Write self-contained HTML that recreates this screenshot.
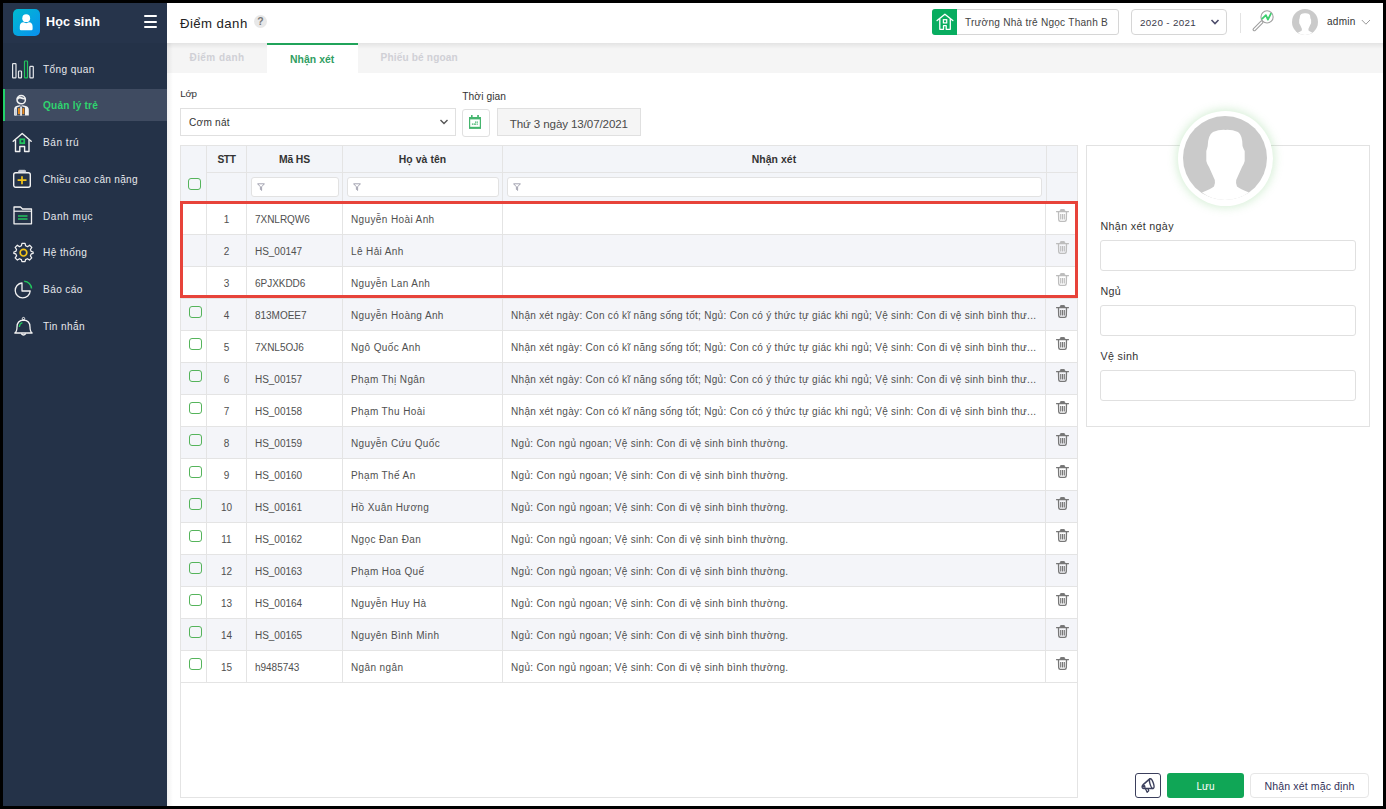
<!DOCTYPE html>
<html><head><meta charset="utf-8"><title>Điểm danh</title><style>
*{box-sizing:border-box;margin:0;padding:0}
html,body{width:1386px;height:809px;overflow:hidden;background:#000;font-family:"Liberation Sans", sans-serif}
#root{position:absolute;left:0;top:0;width:1386px;height:809px;background:#000}
.a{position:absolute}
.t{position:absolute;white-space:nowrap;line-height:1}
</style></head>
<body><div id="root">
<div class="a" style="left:3px;top:3px;width:1380px;height:803px;background:#fff"></div>
<div class="a" style="left:3px;top:3px;width:164px;height:803px;background:#243248"></div>
<div class="a" style="left:3px;top:3px;width:164px;height:40px;background:#26344b"></div>
<div class="a" style="left:13px;top:9px;width:27px;height:27px;border-radius:5px;background:linear-gradient(135deg,#00bcd0,#0a8ff0)"></div>
<svg class="a" style="left:13px;top:9px" width="27" height="27" viewBox="0 0 27 27"><circle cx="13.2" cy="9.2" r="3.9" fill="#fff"/><path d="M6.8 20 V17.5 Q6.8 13.4 10.5 13.2 L13.2 14.2 L15.9 13.2 Q19.6 13.4 19.6 17.5 V20 Q19.6 21.2 18.4 21.2 H8 Q6.8 21.2 6.8 20 Z" fill="#fff"/></svg>
<div class="t" style="left:46px;top:16.23px;font-size:12.6px;letter-spacing:0.1px;font-weight:700;color:#fff;">Học sinh</div>
<div class="a" style="left:144px;top:15px;width:13px;height:2px;background:#fff;border-radius:1px"></div>
<div class="a" style="left:144px;top:20.5px;width:13px;height:2px;background:#fff;border-radius:1px"></div>
<div class="a" style="left:144px;top:26px;width:13px;height:2px;background:#fff;border-radius:1px"></div>
<div class="a" style="left:3px;top:89px;width:164px;height:32px;background:#3f4b61"></div>
<div class="a" style="left:3px;top:89px;width:2px;height:32px;background:#22d36b"></div>
<div class="t" style="left:43px;top:65.15px;font-size:10.1px;letter-spacing:0.39px;font-weight:400;color:#e6e8ec;">Tổng quan</div>
<div class="t" style="left:43px;top:101.25px;font-size:10.1px;letter-spacing:0.21px;font-weight:700;color:#2fd46f;">Quản lý trẻ</div>
<div class="t" style="left:43px;top:137.95px;font-size:10.1px;letter-spacing:0.52px;font-weight:400;color:#e6e8ec;">Bán trú</div>
<div class="t" style="left:43px;top:175.05px;font-size:10.1px;letter-spacing:0.28px;font-weight:400;color:#e6e8ec;">Chiều cao cân nặng</div>
<div class="t" style="left:43px;top:212.25px;font-size:10.1px;letter-spacing:0.51px;font-weight:400;color:#e6e8ec;">Danh mục</div>
<div class="t" style="left:43px;top:248.25px;font-size:10.1px;letter-spacing:0.4px;font-weight:400;color:#e6e8ec;">Hệ thống</div>
<div class="t" style="left:43px;top:284.95px;font-size:10.1px;letter-spacing:0.4px;font-weight:400;color:#e6e8ec;">Báo cáo</div>
<div class="t" style="left:43px;top:322.05px;font-size:10.1px;letter-spacing:0.4px;font-weight:400;color:#e6e8ec;">Tin nhắn</div>
<svg class="a" style="left:11px;top:59px" width="24" height="21" viewBox="0 0 24 21"><rect x="1.6" y="4.6" width="3.4" height="14.2" rx="0.6" fill="none" stroke="#e4e6ea" stroke-width="1.2"/><rect x="7.5" y="12" width="3" height="6.8" rx="0.6" fill="none" stroke="#e4e6ea" stroke-width="1.2"/><rect x="13.5" y="2" width="3" height="16.8" rx="0.6" fill="none" stroke="#22c55e" stroke-width="1.2"/><rect x="18.9" y="7.4" width="3.4" height="11.4" rx="0.6" fill="none" stroke="#e4e6ea" stroke-width="1.2"/></svg>
<svg class="a" style="left:13px;top:94px" width="18" height="23" viewBox="0 0 18 23"><path d="M1.1 21.6 V15.5 Q1.1 12.4 4.2 11.7 L6.6 11.2 L8.05 12.2 L9.5 11.2 L11.9 11.7 Q15.8 12.4 15.8 15.5 V21.6 Z" fill="#f2f2f2"/><path d="M3.9 21.6 V13.4 L7.2 12.3 L8.9 12.3 L12 13.4 V21.6 Z" fill="#3f4b61"/><rect x="7.2" y="12.6" width="1.7" height="9" fill="#f2f2f2"/><rect x="5" y="14.2" width="1.9" height="5.9" fill="#e8891c"/><rect x="9.4" y="14.2" width="1.9" height="5.9" fill="#e8891c"/><rect x="1.9" y="15" width="1.4" height="6.6" fill="#c9ced8"/><circle cx="8.2" cy="5.65" r="4.2" fill="none" stroke="#f2f2f2" stroke-width="1.5"/><path d="M4.3 5.2 Q6 2.6 8.3 3.9 Q10.3 4.9 12.3 4.4" fill="none" stroke="#f2f2f2" stroke-width="1.8"/><rect x="7.6" y="11.4" width="0.9" height="0.9" fill="#b8bec9"/></svg>
<svg class="a" style="left:12px;top:132px" width="21" height="21" viewBox="0 0 21 21"><path d="M1.2 9.2 L10.2 1.5 L19.2 9.2" fill="none" stroke="#f2f2f2" stroke-width="1.4" stroke-linejoin="round" stroke-linecap="round"/><path d="M3.5 8 V19.5 H7.8 V14.5 H12.6 V19.5 H17 V8" fill="none" stroke="#f2f2f2" stroke-width="1.4" stroke-linejoin="round"/><rect x="8.3" y="7.3" width="3.9" height="3.9" fill="none" stroke="#22c55e" stroke-width="1.8"/></svg>
<svg class="a" style="left:12px;top:169px" width="21" height="20" viewBox="0 0 21 20"><rect x="1.7" y="3.7" width="16.6" height="14.6" rx="2" fill="none" stroke="#f2f2f2" stroke-width="1.4"/><path d="M6.6 3.3 V2.2 Q6.6 1.3 7.6 1.3 H12.6 Q13.6 1.3 13.6 2.2 V3.3" fill="#c7ccd6" stroke="#c7ccd6" stroke-width="1"/><path d="M10 7.2 V15.2 M5.6 11.2 H14.5" stroke="#f5c518" stroke-width="1.7"/></svg>
<svg class="a" style="left:13px;top:206px" width="20" height="19" viewBox="0 0 20 19"><path d="M1 17.8 V1 H7.5 L9.5 3 H18.5 V17.8 Z" fill="none" stroke="#f2f2f2" stroke-width="1.3" stroke-linejoin="round"/><path d="M1 5.2 H18.5" stroke="#f2f2f2" stroke-width="1.2"/><path d="M5 10 H14.5 M5 13 H14.5" stroke="#22c55e" stroke-width="1.5"/></svg>
<svg class="a" style="left:13px;top:242px" width="21" height="21" viewBox="0 0 24 24"><path d="M10.2 1.5 H13.8 L14.4 4.3 L16.6 5.3 L19 3.7 L21.5 6.2 L19.9 8.6 L20.8 10.8 L23 11.4 V13 L20.8 13.6 L19.9 15.8 L21.4 18.2 L18.9 20.7 L16.5 19.1 L14.3 20.1 L13.8 22.5 H10.2 L9.6 20.1 L7.4 19.1 L5 20.7 L2.5 18.2 L4.1 15.8 L3.2 13.6 L1 13 V11.4 L3.2 10.8 L4.1 8.6 L2.5 6.2 L5 3.7 L7.4 5.3 L9.6 4.3 Z" fill="none" stroke="#f2f2f2" stroke-width="1.4" stroke-linejoin="round"/><circle cx="12" cy="12.2" r="3.8" fill="none" stroke="#f5c518" stroke-width="1.9"/></svg>
<svg class="a" style="left:13px;top:280px" width="20" height="20" viewBox="0 0 20 20"><path d="M9 3 A7.5 7.5 0 1 0 17.2 11 H9 Z" fill="none" stroke="#f2f2f2" stroke-width="1.3" stroke-linejoin="round"/><path d="M11.2 1.3 A7.5 7.5 0 0 1 18.5 8.6" fill="none" stroke="#22c55e" stroke-width="1.5"/></svg>
<svg class="a" style="left:13px;top:316px" width="21" height="21" viewBox="0 0 21 21"><path d="M1.8 17 Q4 15.5 4 11 Q4 4.5 10.5 4 Q17 4.5 17 11 Q17 15.5 19.2 17 Z" fill="none" stroke="#f2f2f2" stroke-width="1.3" stroke-linejoin="round"/><circle cx="10.5" cy="2.6" r="1.2" fill="none" stroke="#f2f2f2" stroke-width="1"/><path d="M8.2 17.5 Q10.5 20.5 12.8 17.5" fill="none" stroke="#f2f2f2" stroke-width="1.3"/><path d="M6.3 11 Q6.6 7.6 9.4 6.6" fill="none" stroke="#22c55e" stroke-width="1.4"/></svg>
<div class="t" style="left:180px;top:16.73px;font-size:13.2px;letter-spacing:0.43px;font-weight:400;color:#222;">Điểm danh</div>
<div class="a" style="left:254px;top:15px;width:13px;height:13px;border-radius:50%;background:#e8e8e8;color:#7a7a7a;font-size:10.5px;line-height:13.5px;text-align:center;font-weight:700">?</div>
<div class="a" style="left:932px;top:9px;width:187px;height:26px;border:1px solid #d6d6d6;border-radius:3px;background:#fff"></div>
<div class="a" style="left:932px;top:9px;width:25px;height:25.5px;background:#08ad60;border-radius:3px 0 0 3px"></div>
<svg class="a" style="left:935px;top:12px" width="19" height="19" viewBox="0 0 19 19"><path d="M2.1 8.5 L9.9 2.2 L17.8 8.5" fill="none" stroke="#fff" stroke-width="1.4" stroke-linecap="round" stroke-linejoin="round"/><path d="M4.8 6.8 V17.3 H8.5 V13.7 H11.2 V17.3 H15.3 V6.8" fill="none" stroke="#fff" stroke-width="1.3" stroke-linejoin="round"/><rect x="8.4" y="7.7" width="3.3" height="3.2" fill="none" stroke="#fff" stroke-width="1.25"/></svg>
<div class="t" style="left:965px;top:18.25px;font-size:10.1px;letter-spacing:0.23px;font-weight:400;color:#444;">Trường Nhà trẻ Ngọc Thanh B</div>
<div class="a" style="left:1131px;top:9px;width:96px;height:26px;border:1px solid #d6d6d6;border-radius:4px"></div>
<div class="t" style="left:1140px;top:18.2px;font-size:9.8px;letter-spacing:0.35px;color:#3a3a4a">2020 - 2021</div>
<svg class="a" style="left:1210px;top:18px" width="10" height="8" viewBox="0 0 10 8"><path d="M1.5 2 L5 5.5 L8.5 2" fill="none" stroke="#4d4d6b" stroke-width="1.6"/></svg>
<div class="a" style="left:1240px;top:12.5px;width:1px;height:20px;background:#e3e3e3"></div>
<svg class="a" style="left:1252px;top:9px" width="23" height="23" viewBox="0 0 23 23"><path d="M9.6 13.2 L2.4 20.4" stroke="#a0a0a0" stroke-width="3.6" stroke-linecap="round"/><path d="M9.6 13.2 L2.4 20.4" stroke="#fff" stroke-width="1.4" stroke-linecap="round"/><circle cx="15.05" cy="7.9" r="6.1" fill="#fff" stroke="#a0a0a0" stroke-width="1.1"/><path d="M10.3 9.6 L13.9 6.2 L15.9 10.6 L18.8 4.8" fill="none" stroke="#3ccf6e" stroke-width="1.8" stroke-linejoin="round" stroke-linecap="round"/></svg>
<svg class="a" style="left:1292px;top:8.5px" width="26" height="26" viewBox="0 0 84 84"><circle cx="42" cy="42" r="42" fill="#cacaca"/><path d="M19 76.5 Q28 73 31 70.5 Q32.5 67 31.8 64 L26 51 Q24 48 23.3 45 L23.3 35 Q24 33 24.7 30 Q25 19 30 16 Q36 13.5 42.5 13.9 Q49 13.5 55 16 Q59.5 19 59.5 30 Q60.5 33 61.7 35 L61.7 45 Q61 48 59 51 L53.2 64 Q52.5 67 54 70.5 Q57 73 66 76.5 Q55 84 42 84 Q29 84 19 76.5 Z" fill="#fff"/></svg>
<div class="t" style="left:1327px;top:17px;font-size:10px;letter-spacing:0.3px;color:#333">admin</div>
<svg class="a" style="left:1361px;top:19px" width="10" height="7" viewBox="0 0 10 7"><path d="M0.8 1 L4.9 5.2 L9 1" fill="none" stroke="#9a9a9a" stroke-width="1"/></svg>
<div class="a" style="left:167px;top:43px;width:1216px;height:30px;background:#f5f5f5"></div>
<div class="a" style="left:167px;top:43px;width:1216px;height:6px;background:linear-gradient(rgba(0,0,0,0.07),rgba(0,0,0,0))"></div>
<div class="a" style="left:267px;top:43px;width:91px;height:30px;background:#fff;border-top:2px solid #20a35a"></div>
<div class="t" style="left:189.5px;top:53.34px;font-size:10px;letter-spacing:0.43px;font-weight:700;color:#d0d0d6;">Điểm danh</div>
<div class="t" style="left:290px;top:55.30px;font-size:10.4px;letter-spacing:0.06px;font-weight:700;color:#2f9e62;">Nhận xét</div>
<div class="t" style="left:380.5px;top:53.25px;font-size:10.1px;letter-spacing:0.16px;font-weight:700;color:#d0d0d6;">Phiếu bé ngoan</div>
<div class="t" style="left:180.3px;top:88.80px;font-size:9.8px;letter-spacing:-0.3px;font-weight:400;color:#333;">Lớp</div>
<div class="a" style="left:180px;top:108px;width:276px;height:28px;border:1px solid #e0e0e0;background:#fff"></div>
<div class="t" style="left:189.1px;top:118.25px;font-size:10.1px;letter-spacing:0.22px;font-weight:400;color:#333;">Cơm nát</div>
<svg class="a" style="left:439px;top:118px" width="10" height="8" viewBox="0 0 10 8"><path d="M1.5 2 L5 5.5 L8.5 2" fill="none" stroke="#555" stroke-width="1.4"/></svg>
<div class="t" style="left:462.3px;top:92.27px;font-size:10.2px;letter-spacing:0.09px;font-weight:400;color:#333;">Thời gian</div>
<div class="a" style="left:462px;top:109px;width:28px;height:28px;border:1px solid #e0e0e0;border-radius:3px;background:#fff"></div>
<svg class="a" style="left:469px;top:115px" width="12" height="14" viewBox="0 0 12 14"><rect x="2" y="0" width="1.6" height="2.4" fill="#45b56e"/><rect x="8.2" y="0" width="1.7" height="2.4" fill="#45b56e"/><rect x="0.6" y="2.6" width="10.8" height="10.5" fill="none" stroke="#45b56e" stroke-width="1.2"/><rect x="0" y="2" width="12" height="2.4" fill="#45b56e"/><rect x="0" y="11.8" width="12" height="1.9" fill="#45b56e"/><path d="M6 7.1h1.3M7.8 7.1h1.1M2.9 9.2h1.1M4.5 9.2h2.5M7.6 9.2h1.2" stroke="#45b56e" stroke-width="1.2"/></svg>
<div class="a" style="left:497px;top:108px;width:144px;height:28px;border:1px solid #e0e0e0;background:#f5f5f5"></div>
<div class="t" style="left:509.7px;top:117.98px;font-size:11.6px;letter-spacing:-0.11px;font-weight:400;color:#4a4a4a;">Thứ 3 ngày 13/07/2021</div>
<div class="a" style="left:180px;top:145px;width:898px;height:653px;border:1px solid #e4e4e4;background:#fff"></div>
<div class="a" style="left:181px;top:146px;width:896px;height:56px;background:#f3f5f9"></div>
<div class="a" style="left:206px;top:172px;width:872px;height:1px;background:#e4e4e4"></div>
<div class="a" style="left:181px;top:202px;width:896px;height:1px;background:#e4e4e4"></div>
<div class="a" style="left:206.0px;top:145px;width:1px;height:538px;background:#e4e4e4"></div>
<div class="a" style="left:246.0px;top:145px;width:1px;height:538px;background:#e4e4e4"></div>
<div class="a" style="left:342.0px;top:145px;width:1px;height:538px;background:#e4e4e4"></div>
<div class="a" style="left:502.0px;top:145px;width:1px;height:538px;background:#e4e4e4"></div>
<div class="a" style="left:1046px;top:145px;width:1px;height:58px;background:#e4e4e4"></div>
<div class="a" style="left:1045px;top:203px;width:1px;height:480px;background:#e4e4e4"></div>
<div class="t" style="left:206.5px;top:155.07px;font-size:10.2px;letter-spacing:-0.35px;font-weight:700;color:#333;width:40.0px;text-align:center">STT</div>
<div class="t" style="left:246.5px;top:154.90px;font-size:10.4px;letter-spacing:-0.19px;font-weight:700;color:#333;width:96.0px;text-align:center">Mã HS</div>
<div class="t" style="left:342.5px;top:154.90px;font-size:10.4px;letter-spacing:0.08px;font-weight:700;color:#333;width:160.0px;text-align:center">Họ và tên</div>
<div class="t" style="left:502.5px;top:154.90px;font-size:10.4px;letter-spacing:0.08px;font-weight:700;color:#333;width:543.0px;text-align:center">Nhận xét</div>
<div class="a" style="left:188px;top:178px;width:13px;height:12px;border:1.5px solid #55b45b;border-radius:3px;background:transparent"></div>
<div class="a" style="left:251.0px;top:177px;width:87.5px;height:19.6px;border:1px solid #e2e2e2;border-radius:3px;background:#fff"></div>
<svg class="a" style="left:257.0px;top:183px" width="8" height="8" viewBox="0 0 8 8"><path d="M0.6 0.8 H7.4 L4.6 3.8 V7.4 L3.4 6.4 V3.8 Z" fill="none" stroke="#9393a3" stroke-width="0.85" stroke-linejoin="round"/></svg>
<div class="a" style="left:347.0px;top:177px;width:151.5px;height:19.6px;border:1px solid #e2e2e2;border-radius:3px;background:#fff"></div>
<svg class="a" style="left:353.0px;top:183px" width="8" height="8" viewBox="0 0 8 8"><path d="M0.6 0.8 H7.4 L4.6 3.8 V7.4 L3.4 6.4 V3.8 Z" fill="none" stroke="#9393a3" stroke-width="0.85" stroke-linejoin="round"/></svg>
<div class="a" style="left:507.0px;top:177px;width:534.5px;height:19.6px;border:1px solid #e2e2e2;border-radius:3px;background:#fff"></div>
<svg class="a" style="left:513.0px;top:183px" width="8" height="8" viewBox="0 0 8 8"><path d="M0.6 0.8 H7.4 L4.6 3.8 V7.4 L3.4 6.4 V3.8 Z" fill="none" stroke="#9393a3" stroke-width="0.85" stroke-linejoin="round"/></svg>
<div class="a" style="left:181px;top:203px;width:896px;height:32px;background:#fff;border-bottom:1px solid #e4e4e4"></div>
<div class="a" style="left:206.0px;top:203px;width:1px;height:32px;background:#e4e4e4"></div>
<div class="a" style="left:246.0px;top:203px;width:1px;height:32px;background:#e4e4e4"></div>
<div class="a" style="left:342.0px;top:203px;width:1px;height:32px;background:#e4e4e4"></div>
<div class="a" style="left:502.0px;top:203px;width:1px;height:32px;background:#e4e4e4"></div>
<div class="a" style="left:1045.0px;top:203px;width:1px;height:32px;background:#e4e4e4"></div>
<div class="t" style="left:206.5px;width:40px;text-align:center;top:214.6px;font-size:10px;color:#505050">1</div>
<div class="t" style="left:255px;top:214.6px;font-size:10px;letter-spacing:-0.03px;color:#505050">7XNLRQW6</div>
<div class="t" style="left:351px;top:214.6px;font-size:10px;letter-spacing:0.38px;color:#505050">Nguyễn Hoài Anh</div>
<svg class="a" style="left:1056px;top:209px" width="13" height="14" viewBox="0 0 13 14"><path d="M0.6 2.6 H12.4" stroke="#bdbdbd" stroke-width="1.3" stroke-linecap="round"/><path d="M4.3 2.4 V1.3 Q4.3 0.6 5 0.6 H8 Q8.7 0.6 8.7 1.3 V2.4" fill="#bdbdbd" stroke="#bdbdbd" stroke-width="1"/><path d="M2.5 3 L2.7 10.6 Q2.8 12.3 4.4 12.3 H8.6 Q10.2 12.3 10.3 10.6 L10.5 3" fill="none" stroke="#bdbdbd" stroke-width="1.3"/><path d="M4.7 5 V10.4 M6.5 5 V10.4 M8.3 5 V10.4" stroke="#bdbdbd" stroke-width="1.15"/></svg>
<div class="a" style="left:181px;top:235px;width:896px;height:32px;background:#f4f5f9;border-bottom:1px solid #e4e4e4"></div>
<div class="a" style="left:206.0px;top:235px;width:1px;height:32px;background:#e4e4e4"></div>
<div class="a" style="left:246.0px;top:235px;width:1px;height:32px;background:#e4e4e4"></div>
<div class="a" style="left:342.0px;top:235px;width:1px;height:32px;background:#e4e4e4"></div>
<div class="a" style="left:502.0px;top:235px;width:1px;height:32px;background:#e4e4e4"></div>
<div class="a" style="left:1045.0px;top:235px;width:1px;height:32px;background:#e4e4e4"></div>
<div class="t" style="left:206.5px;width:40px;text-align:center;top:246.6px;font-size:10px;color:#505050">2</div>
<div class="t" style="left:255px;top:246.6px;font-size:10px;letter-spacing:-0.03px;color:#505050">HS_00147</div>
<div class="t" style="left:351px;top:246.6px;font-size:10px;letter-spacing:0.38px;color:#505050">Lê Hải Anh</div>
<svg class="a" style="left:1056px;top:241px" width="13" height="14" viewBox="0 0 13 14"><path d="M0.6 2.6 H12.4" stroke="#bdbdbd" stroke-width="1.3" stroke-linecap="round"/><path d="M4.3 2.4 V1.3 Q4.3 0.6 5 0.6 H8 Q8.7 0.6 8.7 1.3 V2.4" fill="#bdbdbd" stroke="#bdbdbd" stroke-width="1"/><path d="M2.5 3 L2.7 10.6 Q2.8 12.3 4.4 12.3 H8.6 Q10.2 12.3 10.3 10.6 L10.5 3" fill="none" stroke="#bdbdbd" stroke-width="1.3"/><path d="M4.7 5 V10.4 M6.5 5 V10.4 M8.3 5 V10.4" stroke="#bdbdbd" stroke-width="1.15"/></svg>
<div class="a" style="left:181px;top:267px;width:896px;height:32px;background:#fff;border-bottom:1px solid #e4e4e4"></div>
<div class="a" style="left:206.0px;top:267px;width:1px;height:32px;background:#e4e4e4"></div>
<div class="a" style="left:246.0px;top:267px;width:1px;height:32px;background:#e4e4e4"></div>
<div class="a" style="left:342.0px;top:267px;width:1px;height:32px;background:#e4e4e4"></div>
<div class="a" style="left:502.0px;top:267px;width:1px;height:32px;background:#e4e4e4"></div>
<div class="a" style="left:1045.0px;top:267px;width:1px;height:32px;background:#e4e4e4"></div>
<div class="t" style="left:206.5px;width:40px;text-align:center;top:278.6px;font-size:10px;color:#505050">3</div>
<div class="t" style="left:255px;top:278.6px;font-size:10px;letter-spacing:-0.03px;color:#505050">6PJXKDD6</div>
<div class="t" style="left:351px;top:278.6px;font-size:10px;letter-spacing:0.38px;color:#505050">Nguyễn Lan Anh</div>
<svg class="a" style="left:1056px;top:273px" width="13" height="14" viewBox="0 0 13 14"><path d="M0.6 2.6 H12.4" stroke="#bdbdbd" stroke-width="1.3" stroke-linecap="round"/><path d="M4.3 2.4 V1.3 Q4.3 0.6 5 0.6 H8 Q8.7 0.6 8.7 1.3 V2.4" fill="#bdbdbd" stroke="#bdbdbd" stroke-width="1"/><path d="M2.5 3 L2.7 10.6 Q2.8 12.3 4.4 12.3 H8.6 Q10.2 12.3 10.3 10.6 L10.5 3" fill="none" stroke="#bdbdbd" stroke-width="1.3"/><path d="M4.7 5 V10.4 M6.5 5 V10.4 M8.3 5 V10.4" stroke="#bdbdbd" stroke-width="1.15"/></svg>
<div class="a" style="left:181px;top:299px;width:896px;height:32px;background:#f4f5f9;border-bottom:1px solid #e4e4e4"></div>
<div class="a" style="left:206.0px;top:299px;width:1px;height:32px;background:#e4e4e4"></div>
<div class="a" style="left:246.0px;top:299px;width:1px;height:32px;background:#e4e4e4"></div>
<div class="a" style="left:342.0px;top:299px;width:1px;height:32px;background:#e4e4e4"></div>
<div class="a" style="left:502.0px;top:299px;width:1px;height:32px;background:#e4e4e4"></div>
<div class="a" style="left:1045.0px;top:299px;width:1px;height:32px;background:#e4e4e4"></div>
<div class="t" style="left:206.5px;width:40px;text-align:center;top:310.6px;font-size:10px;color:#505050">4</div>
<div class="t" style="left:255px;top:310.6px;font-size:10px;letter-spacing:-0.03px;color:#505050">813MOEE7</div>
<div class="t" style="left:351px;top:310.6px;font-size:10px;letter-spacing:0.38px;color:#505050">Nguyễn Hoàng Anh</div>
<div class="t" style="left:511px;top:310.6px;font-size:10px;letter-spacing:0.3px;color:#505050">Nhận xét ngày: Con có kĩ năng sống tốt; Ngủ: Con có ý thức tự giác khi ngủ; Vệ sinh: Con đi vệ sinh bình thư...</div>
<div class="a" style="left:189px;top:306px;width:13px;height:12px;border:1.5px solid #55b45b;border-radius:3px;background:transparent"></div>
<svg class="a" style="left:1056px;top:305px" width="13" height="14" viewBox="0 0 13 14"><path d="M0.6 2.6 H12.4" stroke="#777" stroke-width="1.3" stroke-linecap="round"/><path d="M4.3 2.4 V1.3 Q4.3 0.6 5 0.6 H8 Q8.7 0.6 8.7 1.3 V2.4" fill="#777" stroke="#777" stroke-width="1"/><path d="M2.5 3 L2.7 10.6 Q2.8 12.3 4.4 12.3 H8.6 Q10.2 12.3 10.3 10.6 L10.5 3" fill="none" stroke="#777" stroke-width="1.3"/><path d="M4.7 5 V10.4 M6.5 5 V10.4 M8.3 5 V10.4" stroke="#777" stroke-width="1.15"/></svg>
<div class="a" style="left:181px;top:331px;width:896px;height:32px;background:#fff;border-bottom:1px solid #e4e4e4"></div>
<div class="a" style="left:206.0px;top:331px;width:1px;height:32px;background:#e4e4e4"></div>
<div class="a" style="left:246.0px;top:331px;width:1px;height:32px;background:#e4e4e4"></div>
<div class="a" style="left:342.0px;top:331px;width:1px;height:32px;background:#e4e4e4"></div>
<div class="a" style="left:502.0px;top:331px;width:1px;height:32px;background:#e4e4e4"></div>
<div class="a" style="left:1045.0px;top:331px;width:1px;height:32px;background:#e4e4e4"></div>
<div class="t" style="left:206.5px;width:40px;text-align:center;top:342.6px;font-size:10px;color:#505050">5</div>
<div class="t" style="left:255px;top:342.6px;font-size:10px;letter-spacing:-0.03px;color:#505050">7XNL5OJ6</div>
<div class="t" style="left:351px;top:342.6px;font-size:10px;letter-spacing:0.38px;color:#505050">Ngô Quốc Anh</div>
<div class="t" style="left:511px;top:342.6px;font-size:10px;letter-spacing:0.3px;color:#505050">Nhận xét ngày: Con có kĩ năng sống tốt; Ngủ: Con có ý thức tự giác khi ngủ; Vệ sinh: Con đi vệ sinh bình thư...</div>
<div class="a" style="left:189px;top:338px;width:13px;height:12px;border:1.5px solid #55b45b;border-radius:3px;background:transparent"></div>
<svg class="a" style="left:1056px;top:337px" width="13" height="14" viewBox="0 0 13 14"><path d="M0.6 2.6 H12.4" stroke="#777" stroke-width="1.3" stroke-linecap="round"/><path d="M4.3 2.4 V1.3 Q4.3 0.6 5 0.6 H8 Q8.7 0.6 8.7 1.3 V2.4" fill="#777" stroke="#777" stroke-width="1"/><path d="M2.5 3 L2.7 10.6 Q2.8 12.3 4.4 12.3 H8.6 Q10.2 12.3 10.3 10.6 L10.5 3" fill="none" stroke="#777" stroke-width="1.3"/><path d="M4.7 5 V10.4 M6.5 5 V10.4 M8.3 5 V10.4" stroke="#777" stroke-width="1.15"/></svg>
<div class="a" style="left:181px;top:363px;width:896px;height:32px;background:#f4f5f9;border-bottom:1px solid #e4e4e4"></div>
<div class="a" style="left:206.0px;top:363px;width:1px;height:32px;background:#e4e4e4"></div>
<div class="a" style="left:246.0px;top:363px;width:1px;height:32px;background:#e4e4e4"></div>
<div class="a" style="left:342.0px;top:363px;width:1px;height:32px;background:#e4e4e4"></div>
<div class="a" style="left:502.0px;top:363px;width:1px;height:32px;background:#e4e4e4"></div>
<div class="a" style="left:1045.0px;top:363px;width:1px;height:32px;background:#e4e4e4"></div>
<div class="t" style="left:206.5px;width:40px;text-align:center;top:374.6px;font-size:10px;color:#505050">6</div>
<div class="t" style="left:255px;top:374.6px;font-size:10px;letter-spacing:-0.03px;color:#505050">HS_00157</div>
<div class="t" style="left:351px;top:374.6px;font-size:10px;letter-spacing:0.38px;color:#505050">Phạm Thị Ngân</div>
<div class="t" style="left:511px;top:374.6px;font-size:10px;letter-spacing:0.3px;color:#505050">Nhận xét ngày: Con có kĩ năng sống tốt; Ngủ: Con có ý thức tự giác khi ngủ; Vệ sinh: Con đi vệ sinh bình thư...</div>
<div class="a" style="left:189px;top:370px;width:13px;height:12px;border:1.5px solid #55b45b;border-radius:3px;background:transparent"></div>
<svg class="a" style="left:1056px;top:369px" width="13" height="14" viewBox="0 0 13 14"><path d="M0.6 2.6 H12.4" stroke="#777" stroke-width="1.3" stroke-linecap="round"/><path d="M4.3 2.4 V1.3 Q4.3 0.6 5 0.6 H8 Q8.7 0.6 8.7 1.3 V2.4" fill="#777" stroke="#777" stroke-width="1"/><path d="M2.5 3 L2.7 10.6 Q2.8 12.3 4.4 12.3 H8.6 Q10.2 12.3 10.3 10.6 L10.5 3" fill="none" stroke="#777" stroke-width="1.3"/><path d="M4.7 5 V10.4 M6.5 5 V10.4 M8.3 5 V10.4" stroke="#777" stroke-width="1.15"/></svg>
<div class="a" style="left:181px;top:395px;width:896px;height:32px;background:#fff;border-bottom:1px solid #e4e4e4"></div>
<div class="a" style="left:206.0px;top:395px;width:1px;height:32px;background:#e4e4e4"></div>
<div class="a" style="left:246.0px;top:395px;width:1px;height:32px;background:#e4e4e4"></div>
<div class="a" style="left:342.0px;top:395px;width:1px;height:32px;background:#e4e4e4"></div>
<div class="a" style="left:502.0px;top:395px;width:1px;height:32px;background:#e4e4e4"></div>
<div class="a" style="left:1045.0px;top:395px;width:1px;height:32px;background:#e4e4e4"></div>
<div class="t" style="left:206.5px;width:40px;text-align:center;top:406.6px;font-size:10px;color:#505050">7</div>
<div class="t" style="left:255px;top:406.6px;font-size:10px;letter-spacing:-0.03px;color:#505050">HS_00158</div>
<div class="t" style="left:351px;top:406.6px;font-size:10px;letter-spacing:0.38px;color:#505050">Phạm Thu Hoài</div>
<div class="t" style="left:511px;top:406.6px;font-size:10px;letter-spacing:0.3px;color:#505050">Nhận xét ngày: Con có kĩ năng sống tốt; Ngủ: Con có ý thức tự giác khi ngủ; Vệ sinh: Con đi vệ sinh bình thư...</div>
<div class="a" style="left:189px;top:402px;width:13px;height:12px;border:1.5px solid #55b45b;border-radius:3px;background:transparent"></div>
<svg class="a" style="left:1056px;top:401px" width="13" height="14" viewBox="0 0 13 14"><path d="M0.6 2.6 H12.4" stroke="#777" stroke-width="1.3" stroke-linecap="round"/><path d="M4.3 2.4 V1.3 Q4.3 0.6 5 0.6 H8 Q8.7 0.6 8.7 1.3 V2.4" fill="#777" stroke="#777" stroke-width="1"/><path d="M2.5 3 L2.7 10.6 Q2.8 12.3 4.4 12.3 H8.6 Q10.2 12.3 10.3 10.6 L10.5 3" fill="none" stroke="#777" stroke-width="1.3"/><path d="M4.7 5 V10.4 M6.5 5 V10.4 M8.3 5 V10.4" stroke="#777" stroke-width="1.15"/></svg>
<div class="a" style="left:181px;top:427px;width:896px;height:32px;background:#f4f5f9;border-bottom:1px solid #e4e4e4"></div>
<div class="a" style="left:206.0px;top:427px;width:1px;height:32px;background:#e4e4e4"></div>
<div class="a" style="left:246.0px;top:427px;width:1px;height:32px;background:#e4e4e4"></div>
<div class="a" style="left:342.0px;top:427px;width:1px;height:32px;background:#e4e4e4"></div>
<div class="a" style="left:502.0px;top:427px;width:1px;height:32px;background:#e4e4e4"></div>
<div class="a" style="left:1045.0px;top:427px;width:1px;height:32px;background:#e4e4e4"></div>
<div class="t" style="left:206.5px;width:40px;text-align:center;top:438.6px;font-size:10px;color:#505050">8</div>
<div class="t" style="left:255px;top:438.6px;font-size:10px;letter-spacing:-0.03px;color:#505050">HS_00159</div>
<div class="t" style="left:351px;top:438.6px;font-size:10px;letter-spacing:0.38px;color:#505050">Nguyễn Cứu Quốc</div>
<div class="t" style="left:511px;top:438.6px;font-size:10px;letter-spacing:0.3px;color:#505050">Ngủ: Con ngủ ngoan; Vệ sinh: Con đi vệ sinh bình thường.</div>
<div class="a" style="left:189px;top:434px;width:13px;height:12px;border:1.5px solid #55b45b;border-radius:3px;background:transparent"></div>
<svg class="a" style="left:1056px;top:433px" width="13" height="14" viewBox="0 0 13 14"><path d="M0.6 2.6 H12.4" stroke="#777" stroke-width="1.3" stroke-linecap="round"/><path d="M4.3 2.4 V1.3 Q4.3 0.6 5 0.6 H8 Q8.7 0.6 8.7 1.3 V2.4" fill="#777" stroke="#777" stroke-width="1"/><path d="M2.5 3 L2.7 10.6 Q2.8 12.3 4.4 12.3 H8.6 Q10.2 12.3 10.3 10.6 L10.5 3" fill="none" stroke="#777" stroke-width="1.3"/><path d="M4.7 5 V10.4 M6.5 5 V10.4 M8.3 5 V10.4" stroke="#777" stroke-width="1.15"/></svg>
<div class="a" style="left:181px;top:459px;width:896px;height:32px;background:#fff;border-bottom:1px solid #e4e4e4"></div>
<div class="a" style="left:206.0px;top:459px;width:1px;height:32px;background:#e4e4e4"></div>
<div class="a" style="left:246.0px;top:459px;width:1px;height:32px;background:#e4e4e4"></div>
<div class="a" style="left:342.0px;top:459px;width:1px;height:32px;background:#e4e4e4"></div>
<div class="a" style="left:502.0px;top:459px;width:1px;height:32px;background:#e4e4e4"></div>
<div class="a" style="left:1045.0px;top:459px;width:1px;height:32px;background:#e4e4e4"></div>
<div class="t" style="left:206.5px;width:40px;text-align:center;top:470.6px;font-size:10px;color:#505050">9</div>
<div class="t" style="left:255px;top:470.6px;font-size:10px;letter-spacing:-0.03px;color:#505050">HS_00160</div>
<div class="t" style="left:351px;top:470.6px;font-size:10px;letter-spacing:0.38px;color:#505050">Phạm Thế An</div>
<div class="t" style="left:511px;top:470.6px;font-size:10px;letter-spacing:0.3px;color:#505050">Ngủ: Con ngủ ngoan; Vệ sinh: Con đi vệ sinh bình thường.</div>
<div class="a" style="left:189px;top:466px;width:13px;height:12px;border:1.5px solid #55b45b;border-radius:3px;background:transparent"></div>
<svg class="a" style="left:1056px;top:465px" width="13" height="14" viewBox="0 0 13 14"><path d="M0.6 2.6 H12.4" stroke="#777" stroke-width="1.3" stroke-linecap="round"/><path d="M4.3 2.4 V1.3 Q4.3 0.6 5 0.6 H8 Q8.7 0.6 8.7 1.3 V2.4" fill="#777" stroke="#777" stroke-width="1"/><path d="M2.5 3 L2.7 10.6 Q2.8 12.3 4.4 12.3 H8.6 Q10.2 12.3 10.3 10.6 L10.5 3" fill="none" stroke="#777" stroke-width="1.3"/><path d="M4.7 5 V10.4 M6.5 5 V10.4 M8.3 5 V10.4" stroke="#777" stroke-width="1.15"/></svg>
<div class="a" style="left:181px;top:491px;width:896px;height:32px;background:#f4f5f9;border-bottom:1px solid #e4e4e4"></div>
<div class="a" style="left:206.0px;top:491px;width:1px;height:32px;background:#e4e4e4"></div>
<div class="a" style="left:246.0px;top:491px;width:1px;height:32px;background:#e4e4e4"></div>
<div class="a" style="left:342.0px;top:491px;width:1px;height:32px;background:#e4e4e4"></div>
<div class="a" style="left:502.0px;top:491px;width:1px;height:32px;background:#e4e4e4"></div>
<div class="a" style="left:1045.0px;top:491px;width:1px;height:32px;background:#e4e4e4"></div>
<div class="t" style="left:206.5px;width:40px;text-align:center;top:502.6px;font-size:10px;color:#505050">10</div>
<div class="t" style="left:255px;top:502.6px;font-size:10px;letter-spacing:-0.03px;color:#505050">HS_00161</div>
<div class="t" style="left:351px;top:502.6px;font-size:10px;letter-spacing:0.38px;color:#505050">Hồ Xuân Hương</div>
<div class="t" style="left:511px;top:502.6px;font-size:10px;letter-spacing:0.3px;color:#505050">Ngủ: Con ngủ ngoan; Vệ sinh: Con đi vệ sinh bình thường.</div>
<div class="a" style="left:189px;top:498px;width:13px;height:12px;border:1.5px solid #55b45b;border-radius:3px;background:transparent"></div>
<svg class="a" style="left:1056px;top:497px" width="13" height="14" viewBox="0 0 13 14"><path d="M0.6 2.6 H12.4" stroke="#777" stroke-width="1.3" stroke-linecap="round"/><path d="M4.3 2.4 V1.3 Q4.3 0.6 5 0.6 H8 Q8.7 0.6 8.7 1.3 V2.4" fill="#777" stroke="#777" stroke-width="1"/><path d="M2.5 3 L2.7 10.6 Q2.8 12.3 4.4 12.3 H8.6 Q10.2 12.3 10.3 10.6 L10.5 3" fill="none" stroke="#777" stroke-width="1.3"/><path d="M4.7 5 V10.4 M6.5 5 V10.4 M8.3 5 V10.4" stroke="#777" stroke-width="1.15"/></svg>
<div class="a" style="left:181px;top:523px;width:896px;height:32px;background:#fff;border-bottom:1px solid #e4e4e4"></div>
<div class="a" style="left:206.0px;top:523px;width:1px;height:32px;background:#e4e4e4"></div>
<div class="a" style="left:246.0px;top:523px;width:1px;height:32px;background:#e4e4e4"></div>
<div class="a" style="left:342.0px;top:523px;width:1px;height:32px;background:#e4e4e4"></div>
<div class="a" style="left:502.0px;top:523px;width:1px;height:32px;background:#e4e4e4"></div>
<div class="a" style="left:1045.0px;top:523px;width:1px;height:32px;background:#e4e4e4"></div>
<div class="t" style="left:206.5px;width:40px;text-align:center;top:534.6px;font-size:10px;color:#505050">11</div>
<div class="t" style="left:255px;top:534.6px;font-size:10px;letter-spacing:-0.03px;color:#505050">HS_00162</div>
<div class="t" style="left:351px;top:534.6px;font-size:10px;letter-spacing:0.38px;color:#505050">Ngọc Đan Đan</div>
<div class="t" style="left:511px;top:534.6px;font-size:10px;letter-spacing:0.3px;color:#505050">Ngủ: Con ngủ ngoan; Vệ sinh: Con đi vệ sinh bình thường.</div>
<div class="a" style="left:189px;top:530px;width:13px;height:12px;border:1.5px solid #55b45b;border-radius:3px;background:transparent"></div>
<svg class="a" style="left:1056px;top:529px" width="13" height="14" viewBox="0 0 13 14"><path d="M0.6 2.6 H12.4" stroke="#777" stroke-width="1.3" stroke-linecap="round"/><path d="M4.3 2.4 V1.3 Q4.3 0.6 5 0.6 H8 Q8.7 0.6 8.7 1.3 V2.4" fill="#777" stroke="#777" stroke-width="1"/><path d="M2.5 3 L2.7 10.6 Q2.8 12.3 4.4 12.3 H8.6 Q10.2 12.3 10.3 10.6 L10.5 3" fill="none" stroke="#777" stroke-width="1.3"/><path d="M4.7 5 V10.4 M6.5 5 V10.4 M8.3 5 V10.4" stroke="#777" stroke-width="1.15"/></svg>
<div class="a" style="left:181px;top:555px;width:896px;height:32px;background:#f4f5f9;border-bottom:1px solid #e4e4e4"></div>
<div class="a" style="left:206.0px;top:555px;width:1px;height:32px;background:#e4e4e4"></div>
<div class="a" style="left:246.0px;top:555px;width:1px;height:32px;background:#e4e4e4"></div>
<div class="a" style="left:342.0px;top:555px;width:1px;height:32px;background:#e4e4e4"></div>
<div class="a" style="left:502.0px;top:555px;width:1px;height:32px;background:#e4e4e4"></div>
<div class="a" style="left:1045.0px;top:555px;width:1px;height:32px;background:#e4e4e4"></div>
<div class="t" style="left:206.5px;width:40px;text-align:center;top:566.6px;font-size:10px;color:#505050">12</div>
<div class="t" style="left:255px;top:566.6px;font-size:10px;letter-spacing:-0.03px;color:#505050">HS_00163</div>
<div class="t" style="left:351px;top:566.6px;font-size:10px;letter-spacing:0.38px;color:#505050">Phạm Hoa Quế</div>
<div class="t" style="left:511px;top:566.6px;font-size:10px;letter-spacing:0.3px;color:#505050">Ngủ: Con ngủ ngoan; Vệ sinh: Con đi vệ sinh bình thường.</div>
<div class="a" style="left:189px;top:562px;width:13px;height:12px;border:1.5px solid #55b45b;border-radius:3px;background:transparent"></div>
<svg class="a" style="left:1056px;top:561px" width="13" height="14" viewBox="0 0 13 14"><path d="M0.6 2.6 H12.4" stroke="#777" stroke-width="1.3" stroke-linecap="round"/><path d="M4.3 2.4 V1.3 Q4.3 0.6 5 0.6 H8 Q8.7 0.6 8.7 1.3 V2.4" fill="#777" stroke="#777" stroke-width="1"/><path d="M2.5 3 L2.7 10.6 Q2.8 12.3 4.4 12.3 H8.6 Q10.2 12.3 10.3 10.6 L10.5 3" fill="none" stroke="#777" stroke-width="1.3"/><path d="M4.7 5 V10.4 M6.5 5 V10.4 M8.3 5 V10.4" stroke="#777" stroke-width="1.15"/></svg>
<div class="a" style="left:181px;top:587px;width:896px;height:32px;background:#fff;border-bottom:1px solid #e4e4e4"></div>
<div class="a" style="left:206.0px;top:587px;width:1px;height:32px;background:#e4e4e4"></div>
<div class="a" style="left:246.0px;top:587px;width:1px;height:32px;background:#e4e4e4"></div>
<div class="a" style="left:342.0px;top:587px;width:1px;height:32px;background:#e4e4e4"></div>
<div class="a" style="left:502.0px;top:587px;width:1px;height:32px;background:#e4e4e4"></div>
<div class="a" style="left:1045.0px;top:587px;width:1px;height:32px;background:#e4e4e4"></div>
<div class="t" style="left:206.5px;width:40px;text-align:center;top:598.6px;font-size:10px;color:#505050">13</div>
<div class="t" style="left:255px;top:598.6px;font-size:10px;letter-spacing:-0.03px;color:#505050">HS_00164</div>
<div class="t" style="left:351px;top:598.6px;font-size:10px;letter-spacing:0.38px;color:#505050">Nguyễn Huy Hà</div>
<div class="t" style="left:511px;top:598.6px;font-size:10px;letter-spacing:0.3px;color:#505050">Ngủ: Con ngủ ngoan; Vệ sinh: Con đi vệ sinh bình thường.</div>
<div class="a" style="left:189px;top:594px;width:13px;height:12px;border:1.5px solid #55b45b;border-radius:3px;background:transparent"></div>
<svg class="a" style="left:1056px;top:593px" width="13" height="14" viewBox="0 0 13 14"><path d="M0.6 2.6 H12.4" stroke="#777" stroke-width="1.3" stroke-linecap="round"/><path d="M4.3 2.4 V1.3 Q4.3 0.6 5 0.6 H8 Q8.7 0.6 8.7 1.3 V2.4" fill="#777" stroke="#777" stroke-width="1"/><path d="M2.5 3 L2.7 10.6 Q2.8 12.3 4.4 12.3 H8.6 Q10.2 12.3 10.3 10.6 L10.5 3" fill="none" stroke="#777" stroke-width="1.3"/><path d="M4.7 5 V10.4 M6.5 5 V10.4 M8.3 5 V10.4" stroke="#777" stroke-width="1.15"/></svg>
<div class="a" style="left:181px;top:619px;width:896px;height:32px;background:#f4f5f9;border-bottom:1px solid #e4e4e4"></div>
<div class="a" style="left:206.0px;top:619px;width:1px;height:32px;background:#e4e4e4"></div>
<div class="a" style="left:246.0px;top:619px;width:1px;height:32px;background:#e4e4e4"></div>
<div class="a" style="left:342.0px;top:619px;width:1px;height:32px;background:#e4e4e4"></div>
<div class="a" style="left:502.0px;top:619px;width:1px;height:32px;background:#e4e4e4"></div>
<div class="a" style="left:1045.0px;top:619px;width:1px;height:32px;background:#e4e4e4"></div>
<div class="t" style="left:206.5px;width:40px;text-align:center;top:630.6px;font-size:10px;color:#505050">14</div>
<div class="t" style="left:255px;top:630.6px;font-size:10px;letter-spacing:-0.03px;color:#505050">HS_00165</div>
<div class="t" style="left:351px;top:630.6px;font-size:10px;letter-spacing:0.38px;color:#505050">Nguyên Bình Minh</div>
<div class="t" style="left:511px;top:630.6px;font-size:10px;letter-spacing:0.3px;color:#505050">Ngủ: Con ngủ ngoan; Vệ sinh: Con đi vệ sinh bình thường.</div>
<div class="a" style="left:189px;top:626px;width:13px;height:12px;border:1.5px solid #55b45b;border-radius:3px;background:transparent"></div>
<svg class="a" style="left:1056px;top:625px" width="13" height="14" viewBox="0 0 13 14"><path d="M0.6 2.6 H12.4" stroke="#777" stroke-width="1.3" stroke-linecap="round"/><path d="M4.3 2.4 V1.3 Q4.3 0.6 5 0.6 H8 Q8.7 0.6 8.7 1.3 V2.4" fill="#777" stroke="#777" stroke-width="1"/><path d="M2.5 3 L2.7 10.6 Q2.8 12.3 4.4 12.3 H8.6 Q10.2 12.3 10.3 10.6 L10.5 3" fill="none" stroke="#777" stroke-width="1.3"/><path d="M4.7 5 V10.4 M6.5 5 V10.4 M8.3 5 V10.4" stroke="#777" stroke-width="1.15"/></svg>
<div class="a" style="left:181px;top:651px;width:896px;height:32px;background:#fff;border-bottom:1px solid #e4e4e4"></div>
<div class="a" style="left:206.0px;top:651px;width:1px;height:32px;background:#e4e4e4"></div>
<div class="a" style="left:246.0px;top:651px;width:1px;height:32px;background:#e4e4e4"></div>
<div class="a" style="left:342.0px;top:651px;width:1px;height:32px;background:#e4e4e4"></div>
<div class="a" style="left:502.0px;top:651px;width:1px;height:32px;background:#e4e4e4"></div>
<div class="a" style="left:1045.0px;top:651px;width:1px;height:32px;background:#e4e4e4"></div>
<div class="t" style="left:206.5px;width:40px;text-align:center;top:662.6px;font-size:10px;color:#505050">15</div>
<div class="t" style="left:255px;top:662.6px;font-size:10px;letter-spacing:-0.03px;color:#505050">h9485743</div>
<div class="t" style="left:351px;top:662.6px;font-size:10px;letter-spacing:0.38px;color:#505050">Ngân ngân</div>
<div class="t" style="left:511px;top:662.6px;font-size:10px;letter-spacing:0.3px;color:#505050">Ngủ: Con ngủ ngoan; Vệ sinh: Con đi vệ sinh bình thường.</div>
<div class="a" style="left:189px;top:658px;width:13px;height:12px;border:1.5px solid #55b45b;border-radius:3px;background:transparent"></div>
<svg class="a" style="left:1056px;top:657px" width="13" height="14" viewBox="0 0 13 14"><path d="M0.6 2.6 H12.4" stroke="#777" stroke-width="1.3" stroke-linecap="round"/><path d="M4.3 2.4 V1.3 Q4.3 0.6 5 0.6 H8 Q8.7 0.6 8.7 1.3 V2.4" fill="#777" stroke="#777" stroke-width="1"/><path d="M2.5 3 L2.7 10.6 Q2.8 12.3 4.4 12.3 H8.6 Q10.2 12.3 10.3 10.6 L10.5 3" fill="none" stroke="#777" stroke-width="1.3"/><path d="M4.7 5 V10.4 M6.5 5 V10.4 M8.3 5 V10.4" stroke="#777" stroke-width="1.15"/></svg>
<div class="a" style="left:180px;top:201px;width:898px;height:97px;border:3px solid #e7433a"></div>
<div class="a" style="left:1086px;top:145px;width:284px;height:282px;border:1px solid #e2e2e2;background:#fff"></div>
<div class="a" style="left:1177.5px;top:110.5px;width:95px;height:95px;border-radius:50%;background:#fff;box-shadow:0 0 9px 2px rgba(120,200,120,0.28)"></div>
<svg class="a" style="left:1183px;top:116px" width="84" height="84" viewBox="0 0 84 84"><circle cx="42" cy="42" r="42" fill="#cacaca"/><path d="M19 76.5 Q28 73 31 70.5 Q32.5 67 31.8 64 L26 51 Q24 48 23.3 45 L23.3 35 Q24 33 24.7 30 Q25 19 30 16 Q36 13.5 42.5 13.9 Q49 13.5 55 16 Q59.5 19 59.5 30 Q60.5 33 61.7 35 L61.7 45 Q61 48 59 51 L53.2 64 Q52.5 67 54 70.5 Q57 73 66 76.5 Q55 84 42 84 Q29 84 19 76.5 Z" fill="#fff"/></svg>
<div class="t" style="left:1100.5px;top:220.54px;font-size:10.7px;letter-spacing:0.34px;font-weight:400;color:#333;">Nhận xét ngày</div>
<div class="a" style="left:1100px;top:240.0px;width:256px;height:30.5px;border:1px solid #e0e0e0;border-radius:3px;background:#fff"></div>
<div class="t" style="left:1100.5px;top:285.54px;font-size:10.7px;letter-spacing:0.34px;font-weight:400;color:#333;">Ngủ</div>
<div class="a" style="left:1100px;top:305.0px;width:256px;height:30.5px;border:1px solid #e0e0e0;border-radius:3px;background:#fff"></div>
<div class="t" style="left:1100.5px;top:350.54px;font-size:10.7px;letter-spacing:0.34px;font-weight:400;color:#333;">Vệ sinh</div>
<div class="a" style="left:1100px;top:370.0px;width:256px;height:30.5px;border:1px solid #e0e0e0;border-radius:3px;background:#fff"></div>
<div class="a" style="left:1135px;top:773px;width:26px;height:25px;border:1px solid #3b3f5c;border-radius:3px;background:#fff"></div>
<svg class="a" style="left:1140px;top:777px" width="16" height="17" viewBox="0 0 16 17"><path d="M10 1.6 L3.2 7.6 Q1.6 9.2 2.3 10.6 Q2.9 11.6 4.2 11.5 L13.3 11.6" fill="none" stroke="#3b3f5c" stroke-width="1.5" stroke-linejoin="round"/><path d="M3 8.2 Q2.4 10 3.6 10.8 L5.8 10.8 L5 8 Z" fill="#3b3f5c"/><ellipse cx="11.7" cy="6.6" rx="1.7" ry="5.1" transform="rotate(-18 11.7 6.6)" fill="none" stroke="#3b3f5c" stroke-width="1.4"/><path d="M5.4 11.4 L7.1 15.3 L8.7 13.7 L8.1 11.6" fill="none" stroke="#3b3f5c" stroke-width="1.3" stroke-linejoin="round"/></svg>
<div class="a" style="left:1167px;top:773px;width:77px;height:25px;background:#10a656;border-radius:3px"></div>
<div class="t" style="left:1167px;top:782.13px;font-size:10px;letter-spacing:0.06px;font-weight:400;color:#fff;width:77px;text-align:center">Lưu</div>
<div class="a" style="left:1250px;top:773px;width:119px;height:25px;border:1px solid #e6e6e6;border-radius:4px;background:#fff"></div>
<div class="t" style="left:1250px;top:781.13px;font-size:10.6px;letter-spacing:0.1px;font-weight:400;color:#33335a;width:119px;text-align:center">Nhận xét mặc định</div>
<div class="a" style="left:167px;top:43px;width:6px;height:763px;background:linear-gradient(90deg,rgba(0,0,0,0.06),rgba(0,0,0,0))"></div>
</div></body></html>
